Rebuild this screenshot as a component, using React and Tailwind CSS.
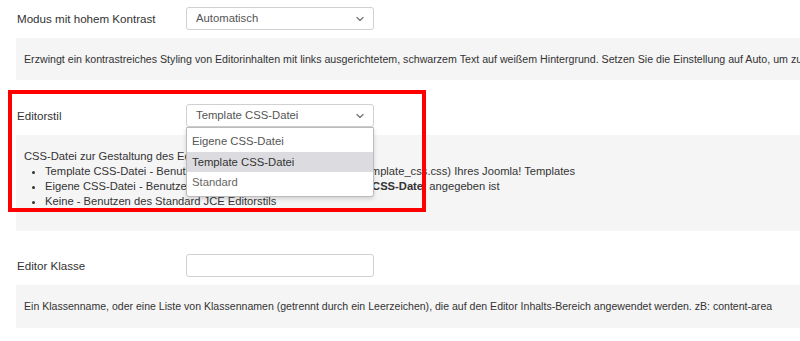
import { ChevronDown } from "lucide-react";

const Select = ({ value, open }) => (
  <div className="relative w-[188px]">
    <div className="flex h-[23px] items-center justify-between rounded-[3px] border border-[#d0d0d0] bg-white pl-[9px] pr-[7px] text-[11.3px] text-[#555]">
      <span>{value}</span>
      <ChevronDown className="h-3 w-3 text-[#777]" strokeWidth={2.5} />
    </div>
    {open && (
      <ul className="absolute left-0 top-[23px] z-10 w-full rounded-b-[3px] border border-[#bbb] bg-white py-[3px] text-[11.3px] shadow-[0_2px_4px_rgba(0,0,0,0.15)]">
        <li className="flex h-[21px] items-center px-[5px] text-[#555]">Eigene CSS-Datei</li>
        <li className="flex h-[20px] items-center bg-[#dcdce0] px-[5px] text-[#333]">Template CSS-Datei</li>
        <li className="flex h-[21px] items-center px-[5px] text-[#666]">Standard</li>
      </ul>
    )}
  </div>
);

const Field = ({ label, children }) => (
  <div className="flex items-center">
    <div className="w-[186px] shrink-0 whitespace-nowrap pl-[17px] text-[11.6px] text-[#333]">{label}</div>
    {children}
  </div>
);

const Help = ({ children, className }) => (
  <div className={`ml-[16px] overflow-hidden whitespace-nowrap bg-[#f5f5f5] pl-[8px] leading-[15px] text-[#333] ${className}`}>
    {children}
  </div>
);

export default function App() {
  return (
    <div className="relative h-[341px] w-[800px] overflow-hidden bg-white font-['Liberation_Sans',Arial,sans-serif]">
      <div className="pt-[7px]">
        <Field label="Modus mit hohem Kontrast">
          <Select value="Automatisch" />
        </Field>
        <Help className="mt-[8px] h-[42px] pt-[14px] text-[10.65px]">
          Erzwingt ein kontrastreiches Styling von Editorinhalten mit links ausgerichtetem, schwarzem Text auf weißem Hintergrund. Setzen Sie die Einstellung auf Auto, um zu erkennen, ob der Hochkontrastmodus aktiv ist.
        </Help>

        <div className="mt-[24px]">
          <Field label="Editorstil">
            <Select value="Template CSS-Datei" open />
          </Field>
        </div>
        <Help className="mt-[8px] h-[96px] pt-[14px] text-[11.2px]">
          <p>CSS-Datei zur Gestaltung des Editorinhalts</p>
          <ul className="list-disc pl-[21px]">
            <li>Template CSS-Datei - Benutzen der CSS-Datei (editor.css oder template_css.css) Ihres Joomla! Templates</li>
            <li>
              Eigene CSS-Datei - Benutzen der CSS-Datei, die im Feld <b>Eigene CSS-Datei</b> angegeben ist
            </li>
            <li>Keine - Benutzen des Standard JCE Editorstils</li>
          </ul>
        </Help>

        <div className="mt-[23px]">
          <Field label="Editor Klasse">
            <div className="h-[23px] w-[188px] rounded-[3px] border border-[#d0d0d0] bg-white" />
          </Field>
        </div>
        <Help className="mt-[8px] h-[43px] pt-[14px] text-[10.55px]">
          Ein Klassenname, oder eine Liste von Klassennamen (getrennt durch ein Leerzeichen), die auf den Editor Inhalts-Bereich angewendet werden. zB: content-area
        </Help>
      </div>

      <div className="pointer-events-none absolute left-[8px] top-[90px] z-20 h-[122px] w-[418px] border-4 border-[#ff0000]" />
    </div>
  );
}
